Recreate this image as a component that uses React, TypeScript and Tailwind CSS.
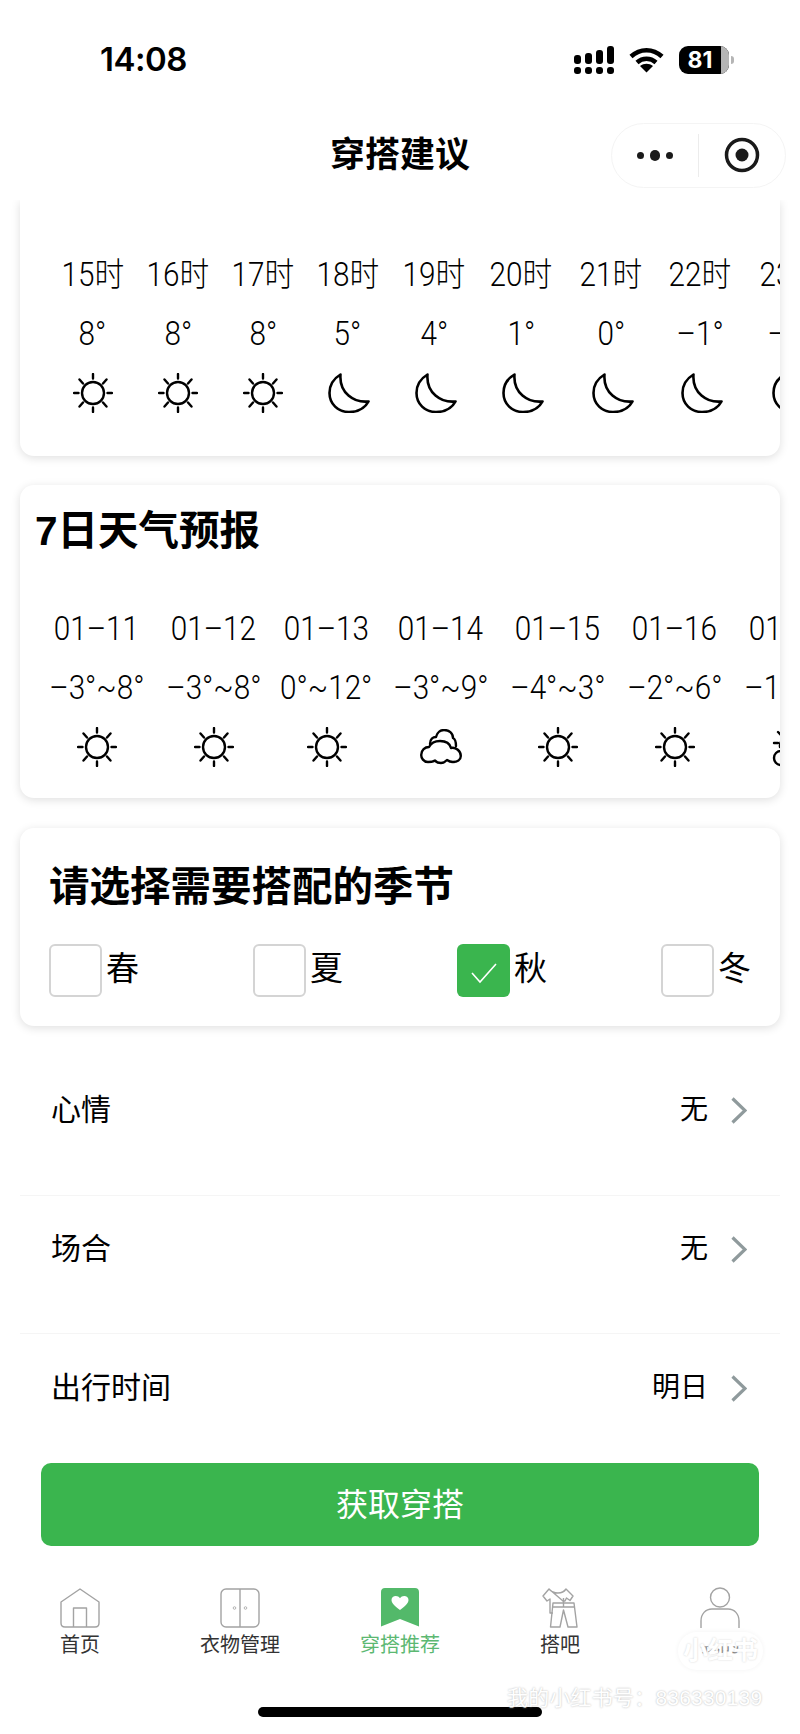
import React from "react"

const hours = [
  { t: "15时", d: "8°", i: "sun", w: "w-[85px]" },
  { t: "16时", d: "8°", i: "sun", w: "w-[86px]" },
  { t: "17时", d: "8°", i: "sun", w: "w-[84px]" },
  { t: "18时", d: "5°", i: "moon", w: "w-[85px]" },
  { t: "19时", d: "4°", i: "moon", w: "w-[88px]" },
  { t: "20时", d: "1°", i: "moon", w: "w-[86px]" },
  { t: "21时", d: "0°", i: "moon", w: "w-[94px]" },
  { t: "22时", d: "–1°", i: "moon", w: "w-[84px]" },
  { t: "23时", d: "–2°", i: "moon", w: "w-[98px]" },
]

const days = [
  { t: "01–11", d: "–3°~8°", i: "sun", w: "w-[117px]" },
  { t: "01–12", d: "–3°~8°", i: "sun", w: "w-[117px]" },
  { t: "01–13", d: "0°~12°", i: "sun", w: "w-[109px]" },
  { t: "01–14", d: "–3°~9°", i: "cloud", w: "w-[119px]" },
  { t: "01–15", d: "–4°~3°", i: "sun", w: "w-[115px]" },
  { t: "01–16", d: "–2°~6°", i: "sun", w: "w-[119px]" },
  { t: "01–17", d: "–1°~5°", i: "partly", w: "w-[115px]" },
]

const seasons = [
  { name: "春", on: false },
  { name: "夏", on: false },
  { name: "秋", on: true },
  { name: "冬", on: false },
]

const rows = [
  { label: "心情", value: "无", box: "h-[138px] pt-[32px] border-b border-[#f5f5f5]" },
  { label: "场合", value: "无", box: "h-[138px] pt-[33px] border-b border-[#f5f5f5]" },
  { label: "出行时间", value: "明日", box: "h-[129px] pt-[34px]" },
]

function Sun() {
  return (
    <svg width="40" height="40" viewBox="0 0 40 40" fill="none" stroke="#000" strokeWidth="2.4" strokeLinecap="round">
      <circle cx="20" cy="20" r="11" />
      <path d="M20 1v4.500M20 34.500V39M1 20h4.500M34.500 20H39M6.500 6.500l3.500 4M33.500 6.500l-3.500 4M6.500 33.500l3.500-4M33.500 33.500l-3.500-4" />
    </svg>
  )
}

function Moon() {
  return (
    <svg width="42" height="40" viewBox="0 0 42 40" fill="none" stroke="#000" strokeWidth="2.6" strokeLinejoin="round" className="ml-[3px]">
      <path d="M12.500 1.500C5 6 1.500 13 1.500 20C1.500 31 10 39 21 39C30 39 37 35 40.500 28.500C26 30 11 20 12.500 1.500Z" />
    </svg>
  )
}

function Cloud() {
  return (
    <svg width="42" height="36" viewBox="0 0 42 36" fill="none" stroke="#000" strokeWidth="2.4" strokeLinejoin="round" strokeLinecap="round">
      <path d="M10 15C10 10 13 8 16 8C17 3 21 1 24 1C29 1 33 4 33 9C35 10 36 13 36 17" />
      <path d="M8 33C3.500 33 1.200 29 1.200 26C1.200 21 5 18 9 18C11 14 15 12 20 12C26 12 30 15 31 19C36 18 40.800 22 40.800 27C40.800 31 37 33 33 33C31 33 29 32.500 27 31C25 33 23 34 21 34C18 34 16 33 15 31.500C13 33 10.500 33 8 33Z" />
    </svg>
  )
}

function PartlyCloudy() {
  return (
    <svg width="40" height="40" viewBox="0 0 40 40" fill="none" stroke="#000" strokeWidth="2.4" strokeLinecap="round">
      <path d="M6 5l3 3M2 16h4M12 2v4" />
      <path d="M8 20a8 8 0 0 1 12-8" />
      <path d="M9 38C4.500 38 2 34.500 2 31C2 27 5 24 9 24C11 19 15 17 20 17C26 17 30 21 31 25C35 25 38 28 38 32C38 36 35 38 31 38Z" />
    </svg>
  )
}

function WeatherIcon({ name }: { name: string }) {
  if (name === "sun") return <Sun />
  if (name === "moon") return <Moon />
  if (name === "cloud") return <Cloud />
  return <PartlyCloudy />
}

function Forecast({ items, className }: { items: { t: string; d: string; i: string; w: string }[]; className: string }) {
  return (
    <div className={`flex overflow-hidden ${className}`}>
      {items.map((item) => (
        <div key={item.t} className={`flex shrink-0 flex-col items-center gap-[19px] leading-10 whitespace-nowrap ${item.w}`}>
          <div className="scale-x-90 font-['Roboto','Noto_Sans_CJK_SC',sans-serif] text-[33px] font-light">{item.t}</div>
          <div className="scale-x-90 font-['Roboto','Noto_Sans_CJK_SC',sans-serif] text-[33px] font-light">{item.d}</div>
          <div className="flex h-10 items-center justify-center">
            <WeatherIcon name={item.i} />
          </div>
        </div>
      ))}
    </div>
  )
}

function Chevron() {
  return (
    <svg width="16" height="27" viewBox="0 0 16 27" fill="none" stroke="#8f9a9c" strokeWidth="3.2">
      <path d="M1.500 1.500L14 13.500L1.500 25.500" />
    </svg>
  )
}

function HomeIcon() {
  return (
    <svg width="40" height="40" viewBox="0 0 40 40" fill="none" stroke="#a3a3a3" strokeWidth="1.400" strokeLinejoin="round">
      <path d="M20 1L1 14V35C1 37.500 2.500 39 5 39H35C37.500 39 39 37.500 39 35V14Z" />
      <path d="M13.500 39V20H26.500V39" />
    </svg>
  )
}

function WardrobeIcon() {
  return (
    <svg width="40" height="40" viewBox="0 0 40 40" fill="none" stroke="#a3a3a3" strokeWidth="1.400">
      <rect x="1" y="1" width="38" height="38" rx="5" />
      <path d="M20 1V39" />
      <circle cx="14.500" cy="20" r="1.300" strokeWidth="0.800" />
      <circle cx="25.500" cy="20" r="1.300" strokeWidth="0.800" />
    </svg>
  )
}

function BookmarkIcon() {
  return (
    <svg width="38" height="40" viewBox="0 0 38 40" fill="none">
      <path d="M0 4C0 1.500 1.500 0 4 0H34C36.500 0 38 1.500 38 4V38.500L19 31L0 38.500Z" fill="#53b96a" />
      <path d="M19 22C14.500 18.500 10.500 15.500 10.500 12C10.500 9.500 12.500 8 14.800 8C16.500 8 18 8.800 19 10.300C20 8.800 21.500 8 23.200 8C25.500 8 27.500 9.500 27.500 12C27.500 15.500 23.500 18.500 19 22Z" fill="#fff" />
    </svg>
  )
}

function ClothesIcon() {
  return (
    <svg width="36" height="40" viewBox="0 0 36 40" fill="none" stroke="#a3a3a3" strokeWidth="1.400" strokeLinejoin="round">
      <path d="M7 1L1 8L5 13L8 11V25H11M21 13H23L24.500 10L28 12.500L31 8L24 1C22 4 19 5 16 5C12.500 5 9.500 4 7 1Z" />
      <path d="M11 15H32L35 39H26L21.500 22L18 39H8.500Z" />
      <path d="M11 19H32M21.500 10V19" />
    </svg>
  )
}

function PersonIcon() {
  return (
    <svg width="40" height="42" viewBox="0 0 40 42" fill="none" stroke="#a3a3a3" strokeWidth="1.400">
      <circle cx="20" cy="10.500" r="9.500" />
      <path d="M1 41V34C1 27 5.500 22 12 22H28C34.500 22 39 27 39 34V41" />
    </svg>
  )
}

const tabs = [
  { label: "首页", icon: <HomeIcon />, active: false },
  { label: "衣物管理", icon: <WardrobeIcon />, active: false },
  { label: "穿搭推荐", icon: <BookmarkIcon />, active: true },
  { label: "搭吧", icon: <ClothesIcon />, active: false },
]

export default function App() {
  return (
    <div className="relative h-[1734px] w-[800px] overflow-hidden bg-white font-['Liberation_Sans','Noto_Sans_CJK_SC',sans-serif] text-black">
      <header className="relative z-10 h-[200px] bg-white">
        <div className="flex h-[120px] items-center justify-between pr-[66px] pl-[100px]">
          <span className="font-['Inter',sans-serif] text-[33px] font-semibold tracking-[-0.5px]">14:08</span>
          <div className="flex items-center gap-[15px]">
            <svg width="40" height="28" viewBox="0 0 40 28" fill="#000">
              <rect x="0" y="9" width="7" height="9" rx="3" />
              <rect x="11" y="7" width="7" height="11" rx="3" />
              <rect x="22" y="4" width="7" height="14" rx="3" />
              <rect x="33" y="0" width="7" height="18" rx="3" />
              <rect x="0" y="21" width="7" height="7" rx="3" />
              <rect x="11" y="21" width="7" height="7" rx="3" />
              <rect x="22" y="21" width="7" height="7" rx="3" />
              <rect x="33" y="21" width="7" height="7" rx="3" />
            </svg>
            <svg width="35" height="26" viewBox="0 0 35 26" fill="none" stroke="#000" strokeWidth="4.500">
              <path d="M2 9.500C11 1 24 1 33 9.500" />
              <path d="M8 15.500C13.500 10.500 21.500 10.500 27 15.500" />
              <path d="M17.500 25.500L11 19C15 16 20 16 24 19Z" fill="#000" stroke="none" />
            </svg>
            <div className="flex items-center gap-[2px]">
              <div className="flex h-[28px] w-[50px] overflow-hidden rounded-[9px] bg-black">
                <div className="flex-1 text-center font-['Inter',sans-serif] text-[23px] leading-[28px] font-bold text-white">81</div>
                <div className="w-[8px] bg-[#b5b5b5]" />
              </div>
              <div className="h-[8px] w-[3px] rounded-r-full bg-[#b5b5b5]" />
            </div>
          </div>
        </div>
        <div className="grid h-[70px] grid-cols-[1fr_auto_1fr] items-center">
          <div />
          <div className="text-[35px] leading-[46px] font-semibold">穿搭建议</div>
          <div className="flex justify-end pr-[14px]">
            <div className="flex h-[65px] w-[175px] items-center rounded-full border border-[#f4f4f4] bg-white">
              <div className="flex h-[43px] w-[87px] items-center justify-center gap-[6px] border-r border-[#ececec]">
                <span className="h-[7px] w-[7px] rounded-full bg-[#1a1a1a]" />
                <span className="h-[11px] w-[10px] rounded-full bg-[#1a1a1a]" />
                <span className="h-[7px] w-[7px] rounded-full bg-[#1a1a1a]" />
              </div>
              <div className="flex flex-1 items-center justify-center">
                <svg width="36" height="36" viewBox="0 0 36 36" fill="none">
                  <circle cx="18" cy="18" r="15.500" stroke="#1a1a1a" strokeWidth="3.500" />
                  <circle cx="18" cy="18" r="6.500" fill="#1a1a1a" />
                </svg>
              </div>
            </div>
          </div>
        </div>
      </header>

      <section className="mx-5 h-[256px] rounded-b-[14px] bg-white pt-[55px] shadow-[0_2px_10px_rgba(0,0,0,0.13)]">
        <Forecast items={hours} className="pl-[30px]" />
      </section>

      <section className="mx-5 mt-[29px] h-[313px] rounded-[14px] bg-white pt-[23px] shadow-[0_2px_10px_rgba(0,0,0,0.13)]">
        <h2 className="pl-[15px] text-[40.5px] leading-[46px] font-bold">7日天气预报</h2>
        <Forecast items={days} className="mt-[55px] pl-[18px]" />
      </section>

      <section className="mx-5 mt-[30px] h-[198px] rounded-[14px] bg-white pr-[29px] pl-[29px] pt-[36px] shadow-[0_2px_10px_rgba(0,0,0,0.13)]">
        <h2 className="text-[40.5px] leading-[46px] font-bold">请选择需要搭配的季节</h2>
        <div className="mt-[34px] flex justify-between">
          {seasons.map((s) => (
            <div key={s.name} className="flex items-start gap-[4px]">
              <div
                className={`flex h-[53px] w-[53px] items-center justify-center rounded-[6px] ${
                  s.on ? "bg-[#3ab54e]" : "border-2 border-[#d4d4d4] bg-white"
                }`}
              >
                {s.on && (
                  <svg width="28" height="22" viewBox="0 0 28 22" fill="none" stroke="#fff" strokeWidth="1.600" className="mt-[4px]">
                    <path d="M2 11L10 20L26 2" />
                  </svg>
                )}
              </div>
              <span className="text-[33px] leading-[50px]">{s.name}</span>
            </div>
          ))}
        </div>
      </section>

      <div className="mx-5 mt-[32px]">
        {rows.map((r) => (
          <div key={r.label} className={`flex items-start justify-between pr-[33px] pl-[31px] ${r.box}`}>
            <span className="text-[30px] leading-10">{r.label}</span>
            <div className="flex h-10 items-center gap-[23px]">
              <span className="text-[28px] leading-10">{r.value}</span>
              <Chevron />
            </div>
          </div>
        ))}
      </div>

      <button className="mx-[41px] flex h-[83px] w-[718px] items-center justify-center rounded-[10px] bg-[#3ab54e] text-[32px] text-white">
        获取穿搭
      </button>

      <nav className="mt-[42px] grid grid-cols-5">
        {tabs.map((tab) => (
          <div key={tab.label} className="flex flex-col items-center">
            <div className="flex h-10 items-center justify-center">{tab.icon}</div>
            <span className={`mt-[4px] text-[20px] leading-[26px] ${tab.active ? "text-[#5cb872]" : "text-[#333]"}`}>{tab.label}</span>
          </div>
        ))}
        <div className="flex flex-col items-center">
          <div className="flex h-10 items-center justify-center">
            <PersonIcon />
          </div>
          <span className="mt-[4px] text-[20px] leading-[26px] text-[#333] [clip-path:inset(55%_0_0_0)]">我的</span>
        </div>
      </nav>

      <div className="mx-auto mt-[49px] h-[10px] w-[284px] rounded-full bg-black" />

      {/* watermark sits over the tab bar */}
      <div className="absolute top-[1632px] left-[678px] flex h-[38px] w-[85px] items-center justify-center rounded-full bg-white/40 text-[25px] font-bold whitespace-nowrap text-white shadow-[0_0_5px_rgba(0,0,0,0.05)] [text-shadow:0_0_2px_#d0d0d0]">
        小红书
      </div>
      <div className="absolute top-[1686px] left-[507px] text-[21px] leading-[24px] tracking-[0.2px] whitespace-nowrap text-white [text-shadow:0_0_2px_#b0b0b0]">
        我的小红书号：836330139
      </div>
    </div>
  )
}
